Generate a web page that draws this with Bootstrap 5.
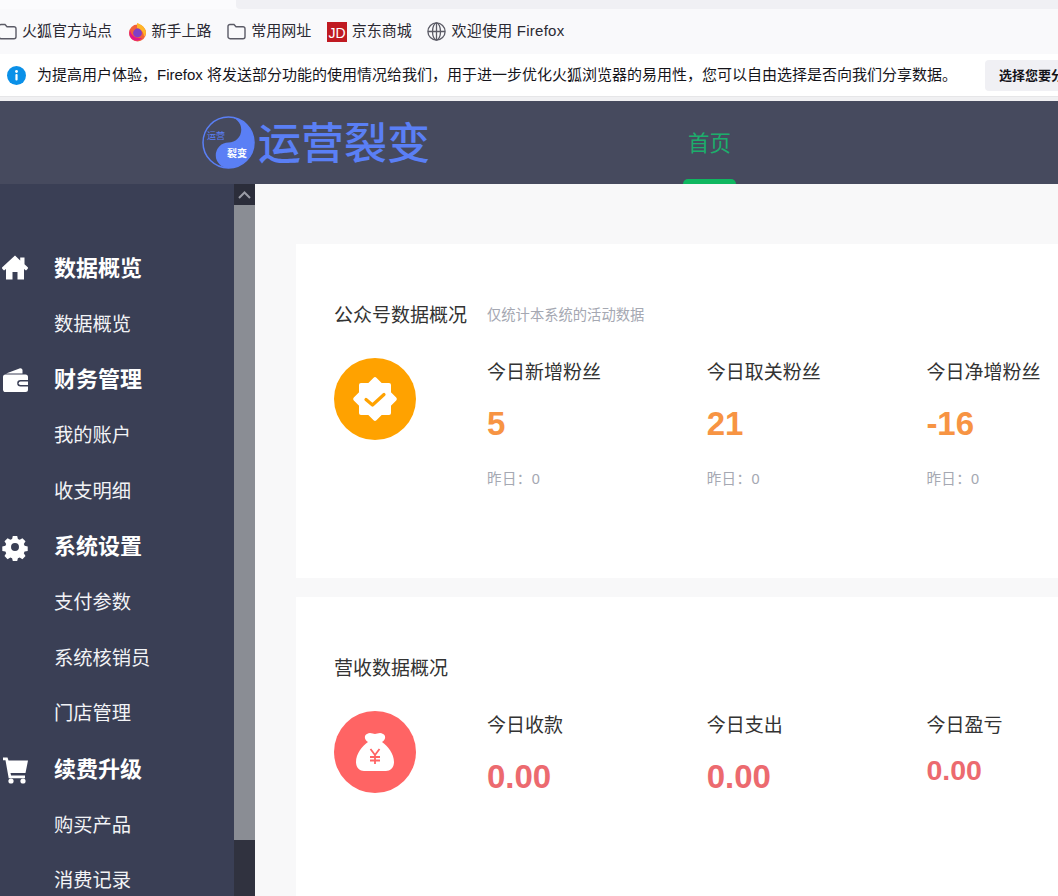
<!DOCTYPE html>
<html lang="zh-CN">
<head>
  <meta charset="UTF-8">
  <meta name="viewport" content="width=device-width, initial-scale=1.0">
  <title>运营裂变</title>
  <link href="https://cdn.jsdelivr.net/npm/bootstrap@5.3.0/dist/css/bootstrap.min.css" rel="stylesheet">
  <style>
    html, body { height: 896px; overflow: hidden; }
    body {
      font-family: "Liberation Sans", "Noto Sans CJK SC", sans-serif;
      background: #f8f8f9;
      color: #333;
      width: 1058px;
    }
    /* 浏览器部分 */
    .tab-strip { height: 9px; padding-left: 236px; background: #fbfbfd; }
    .tab-strip div { height: 100%; background: #f0f0f4; border-bottom-left-radius: 4px; }
    .bookmarks { height: 45px; background: #f9f9fb; font-size: 15px; color: #2b2a33; margin-left: -2px; }
    .bm-item { gap: 5px; margin-right: 15.6px; white-space: nowrap; }
    .bm-wide { letter-spacing: .25px; }
    .info-bar { height: 43px; background: #fff; border-bottom: 1px solid #e6e6e8; font-size: 15px; color: #15141a; white-space: nowrap; padding-left: 7px; }
    .info-text { margin-left: 11px; width: 948px; flex-shrink: 0; }
    .info-btn { height: 31px; width: 120px; flex-shrink: 0; background: #f0f0f4; border-radius: 4px; padding-left: 14px; font-size: 13px; font-weight: 700; line-height: 31px; overflow: hidden; }
    .gap-line { height: 4px; background: #f0f0f2; }
    /* 顶部导航 */
    .top-head { height: 83px; background: #464a5e; padding-left: 202px; }
    .logo-text { font-size: 43px; line-height: 1; color: #5a7ff5; font-weight: 500; margin: 4px 0 0 3px; white-space: nowrap; }
    .nav-home { margin-left: 253px; width: 53px; height: 83px; color: #1cae6c; font-size: 21.5px; }
    .nav-home span { margin-top: 28px; line-height: 30px; }
    .nav-home i { display: block; width: 53px; height: 5px; margin-top: auto; background: #0fb760; border-radius: 5px 5px 0 0; }
    /* 侧边栏 */
    .app-body { height: 712px; }
    .side-menu { width: 234px; flex-shrink: 0; background: #3a3f55; padding-top: 56.5px; color: #fff; overflow: hidden; }
    .menu-row { height: 55.7px; font-size: 19.3px; padding: 2px 0 0 54px; white-space: nowrap; color: #f2f3f6; }
    .menu-head { font-size: 22px; font-weight: 700; padding: 0; color: #fff; }
    .menu-head svg { width: 30px; height: 30px; margin-right: 24px; flex-shrink: 0; fill: #fff; }
    .fake-scroll { width: 21px; flex-shrink: 0; background: #30323f; }
    .fake-scroll .up { height: 21px; background: #2b2d3a; }
    .fake-scroll .thumb { height: 635px; background: #8a8d94; }
    /* 内容 */
    .main-area { min-width: 0; flex: 1 1 auto; overflow: hidden; padding: 60px 0 0 41px; }
    .stat-card { width: 900px; height: 334px; margin-bottom: 19px; padding: 58px 0 0 38px; }
    .card-title-txt { font-size: 19px; line-height: 28px; margin: 0; color: #333; font-weight: 400; }
    .card-sub { font-size: 14.3px; color: #a5a8b2; margin-left: 20px; }
    .stat-row { margin-top: 27px; }
    .round-icon { width: 82px; height: 82px; border-radius: 50%; flex-shrink: 0; margin-top: 1px; }
    .bg-orange { background: #ffa200; }
    .bg-coral { background: #ff6464; }
    .stat-cols { margin: 2px 0 0 71px; }
    .stat-col { width: 219.7px; flex-shrink: 0; }
    .stat-label { font-size: 19px; line-height: 28px; color: #333; white-space: nowrap; }
    .stat-num { font-size: 33px; font-weight: 700; line-height: 38px; margin-top: 18px; }
    .num-orange { color: #f79443; }
    .num-red { color: #ec6a6f; }
    .num-small { font-size: 28.5px; margin-top: 11px; }
    .stat-prev { font-size: 14.5px; color: #a5a8b2; margin-top: 25px; line-height: 22px; letter-spacing: .4px; }
  </style>
</head>
<body>
  <div class="tab-strip"><div></div></div>

  <!-- 书签栏 -->
  <div class="bookmarks d-flex align-items-center">
    <div class="bm-item d-flex align-items-center">
      <svg width="19" height="17" viewBox="0 0 19 17" fill="none" stroke="#5b5b66" stroke-width="1.4"><path d="M1 3.500a2 2 0 0 1 2-2h4l2 2.200h7a2 2 0 0 1 2 2v8a2 2 0 0 1-2 2H3a2 2 0 0 1-2-2z"/></svg>
      <span>火狐官方站点</span>
    </div>
    <div class="bm-item d-flex align-items-center">
      <svg width="19" height="20" viewBox="0 0 19 20"><circle cx="9.500" cy="11" r="8.500" fill="#f2603a"/><path d="M9 1c4 1 8 4 9 9 0 2-1 4-2 5 0-5-3-8-7-9z" fill="#ffb628"/><circle cx="9.500" cy="11" r="4.400" fill="#7f3fc6"/><path d="M2 8c1 5 5 9 12 8-2 3-8 4-11 0-2-2-2-5-1-8z" fill="#e31587"/></svg>
      <span>新手上路</span>
    </div>
    <div class="bm-item d-flex align-items-center">
      <svg width="19" height="17" viewBox="0 0 19 17" fill="none" stroke="#5b5b66" stroke-width="1.4"><path d="M1 3.500a2 2 0 0 1 2-2h4l2 2.200h7a2 2 0 0 1 2 2v8a2 2 0 0 1-2 2H3a2 2 0 0 1-2-2z"/></svg>
      <span>常用网址</span>
    </div>
    <div class="bm-item d-flex align-items-center">
      <svg width="20" height="20" viewBox="0 0 20 20"><rect width="20" height="20" fill="#c01a22"/><text x="10" y="15.500" text-anchor="middle" font-family="Liberation Sans" font-size="14" fill="#fff">JD</text></svg>
      <span>京东商城</span>
    </div>
    <div class="bm-item d-flex align-items-center">
      <svg width="19" height="19" viewBox="0 0 19 19" fill="none" stroke="#5b5b66" stroke-width="1.300"><circle cx="9.500" cy="9.500" r="8.600"/><ellipse cx="9.500" cy="9.500" rx="4" ry="8.600"/><path d="M1 9.500h17M9.500 1v17"/></svg>
      <span class="bm-wide">欢迎使用 Firefox</span>
    </div>
  </div>

  <!-- 提示条 -->
  <div class="info-bar d-flex align-items-center">
    <svg width="19" height="19" viewBox="0 0 19 19" class="flex-shrink-0"><circle cx="9.500" cy="9.500" r="9.500" fill="#0a90e8"/><rect x="8.400" y="8" width="2.200" height="6.600" rx="1" fill="#fff"/><circle cx="9.500" cy="5.500" r="1.400" fill="#fff"/></svg>
    <span class="info-text">为提高用户体验，Firefox 将发送部分功能的使用情况给我们，用于进一步优化火狐浏览器的易用性，您可以自由选择是否向我们分享数据。</span>
    <div class="info-btn">选择您要分享的数据</div>
  </div>
  <div class="gap-line"></div>

  <!-- 顶部导航 -->
  <div class="top-head d-flex align-items-center">
    <svg width="53" height="53" viewBox="0 0 53 53" class="flex-shrink-0">
      <circle cx="26.500" cy="26.500" r="25.500" fill="#464a5e" stroke="#5a7ff5" stroke-width="1.500"/>
      <path d="M26.500 1a25.500 25.500 0 0 1 0 51a12.750 12.750 0 0 1 0-25.500a12.750 12.750 0 0 0 0-25.500z" fill="#5a7ff5"/>
      <text x="14" y="23" text-anchor="middle" font-size="9" fill="#5a7ff5" font-family="Noto Sans CJK SC">运营</text>
      <text x="35" y="41" text-anchor="middle" font-size="10" font-weight="700" fill="#fff" font-family="Noto Sans CJK SC">裂变</text>
    </svg>
    <div class="logo-text">运营裂变</div>
    <div class="nav-home d-flex flex-column align-items-center">
      <span>首页</span>
      <i></i>
    </div>
  </div>

  <div class="app-body d-flex">
    <!-- 侧边菜单 -->
    <div class="side-menu">
      <div class="menu-row menu-head d-flex align-items-center">
        <svg viewBox="0 0 30 30"><path d="M15 2.500 2 14.500l.2 1.200 1.800 1.800L6 16v10.500h6.500V19h5v7.500H24V16l2 1.500 1.800-1.800.2-1.200-3.500-3.200V4.500h-4.300v3z"/></svg>
        <span>数据概览</span>
      </div>
      <div class="menu-row d-flex align-items-center">数据概览</div>
      <div class="menu-row menu-head d-flex align-items-center">
        <svg viewBox="0 0 30 30"><path d="M6 8.500 19.500 3.500c1.500-.5 3 .5 3 2V8.500z"/><path fill-rule="evenodd" d="M5.500 9.500h20a2.500 2.500 0 0 1 2.500 2.500v3h-7.500a3.300 3.300 0 0 0 0 6.600H28v3a2.500 2.500 0 0 1-2.500 2.500h-20A2.500 2.500 0 0 1 3 24.100V12a2.500 2.500 0 0 1 2.500-2.500z"/><path d="M20.500 16.500H28v3.600h-7.500a1.800 1.800 0 0 1 0-3.600z"/></svg>
        <span>财务管理</span>
      </div>
      <div class="menu-row d-flex align-items-center">我的账户</div>
      <div class="menu-row d-flex align-items-center">收支明细</div>
      <div class="menu-row menu-head d-flex align-items-center">
        <svg viewBox="-2 -2 34 34"><path fill-rule="evenodd" d="M12.500 2.500h5l.8 3.500 2 .9 3.100-1.900 3.500 3.500-1.900 3.100.9 2 3.500.8v5l-3.500.8-.9 2 1.900 3.100-3.500 3.500-3.100-1.900-2 .9-.8 3.200h-5l-.8-3.200-2-.9-3.100 1.900-3.500-3.500 1.900-3.100-.9-2-3.500-.8v-5l3.500-.8.9-2-1.900-3.100 3.500-3.500 3.100 1.900 2-.9zM15 10.500a4.500 4.500 0 1 0 0 9 4.500 4.500 0 0 0 0-9z"/></svg>
        <span>系统设置</span>
      </div>
      <div class="menu-row d-flex align-items-center">支付参数</div>
      <div class="menu-row d-flex align-items-center">系统核销员</div>
      <div class="menu-row d-flex align-items-center">门店管理</div>
      <div class="menu-row menu-head d-flex align-items-center">
        <svg viewBox="0 0 30 30"><path d="M3 2.500h4.500l1 3H28l-2.500 12.500H10.500l.6 2.500H25v2.800H8.700L5.500 5.300H3z"/><circle cx="11" cy="26" r="2.600"/><circle cx="23" cy="26" r="2.600"/></svg>
        <span>续费升级</span>
      </div>
      <div class="menu-row d-flex align-items-center">购买产品</div>
      <div class="menu-row d-flex align-items-center">消费记录</div>
    </div>
    <div class="fake-scroll">
      <div class="up d-flex align-items-center justify-content-center">
        <svg width="13" height="8" viewBox="0 0 13 8" fill="none" stroke="#9a9ca6" stroke-width="2"><path d="M1 7 6.500 1.500 12 7"/></svg>
      </div>
      <div class="thumb"></div>
    </div>

    <!-- 内容区 -->
    <div class="main-area">
      <div class="card stat-card border-0 rounded-0">
        <div class="d-flex align-items-center">
          <h5 class="card-title-txt">公众号数据概况</h5>
          <span class="card-sub">仅统计本系统的活动数据</span>
        </div>
        <div class="stat-row d-flex">
          <div class="round-icon bg-orange d-flex align-items-center justify-content-center">
            <svg width="46" height="46" viewBox="0 0 46 46">
              <rect x="7" y="7" width="32" height="32" rx="2" fill="#fff"/>
              <rect x="7" y="7" width="32" height="32" rx="2" fill="#fff" transform="rotate(45 23 23)"/>
              <path d="M14 23.500l6.500 5.500L32 18.500" fill="none" stroke="#ffa200" stroke-width="3.200" stroke-linecap="round" stroke-linejoin="round"/>
            </svg>
          </div>
          <div class="stat-cols d-flex">
            <div class="stat-col">
              <div class="stat-label">今日新增粉丝</div>
              <div class="stat-num num-orange">5</div>
              <div class="stat-prev">昨日：0</div>
            </div>
            <div class="stat-col">
              <div class="stat-label">今日取关粉丝</div>
              <div class="stat-num num-orange">21</div>
              <div class="stat-prev">昨日：0</div>
            </div>
            <div class="stat-col">
              <div class="stat-label">今日净增粉丝</div>
              <div class="stat-num num-orange">-16</div>
              <div class="stat-prev">昨日：0</div>
            </div>
          </div>
        </div>
      </div>

      <div class="card stat-card border-0 rounded-0">
        <h5 class="card-title-txt">营收数据概况</h5>
        <div class="stat-row d-flex">
          <div class="round-icon bg-coral d-flex align-items-center justify-content-center">
            <svg width="38" height="40" viewBox="0 0 38 40">
              <path d="M12 10C8 8 8 3 11 2c3-2 6 0 8 0s5-2 8 0c3 1 3 6-1 8 6 4 12 12 12 20 0 6-4 9-8 9H8c-4 0-8-3-8-9 0-8 6-16 12-20z" fill="#fff"/>
              <path d="M14.500 17 19 23l4.500-6M19 23v9M14 25h10M14 28.500h10" fill="none" stroke="#ff6464" stroke-width="1.800"/>
            </svg>
          </div>
          <div class="stat-cols d-flex">
            <div class="stat-col">
              <div class="stat-label">今日收款</div>
              <div class="stat-num num-red">0.00</div>
            </div>
            <div class="stat-col">
              <div class="stat-label">今日支出</div>
              <div class="stat-num num-red">0.00</div>
            </div>
            <div class="stat-col">
              <div class="stat-label">今日盈亏</div>
              <div class="stat-num num-red num-small">0.00</div>
            </div>
          </div>
        </div>
      </div>
    </div>
  </div>

  <script src="https://cdn.jsdelivr.net/npm/bootstrap@5.3.0/dist/js/bootstrap.bundle.min.js"></script>
</body>
</html>
